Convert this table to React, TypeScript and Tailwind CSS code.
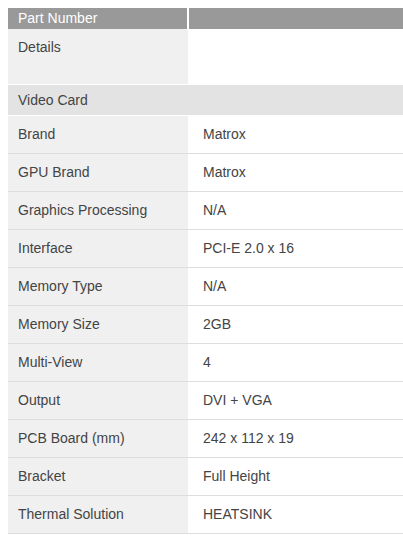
import React from "react";

const rows: [string, string][] = [
  ["Brand", "Matrox"],
  ["GPU Brand", "Matrox"],
  ["Graphics Processing", "N/A"],
  ["Interface", "PCI-E 2.0 x 16"],
  ["Memory Type", "N/A"],
  ["Memory Size", "2GB"],
  ["Multi-View", "4"],
  ["Output", "DVI + VGA"],
  ["PCB Board (mm)", "242 x 112 x 19"],
  ["Bracket", "Full Height"],
  ["Thermal Solution", "HEATSINK"],
];

export default function App() {
  return (
    <div className="bg-white min-h-[545px] pt-2 pl-2 text-[14px] text-[#444444]" style={{ fontFamily: '"Liberation Sans", Arial, sans-serif' }}>
      <div className="w-[395px]">
        <div className="flex h-[21px]">
          <div className="w-[179px] bg-[#999999] text-white pl-[10px] leading-[21px]">Part Number</div>
          <div className="w-[2px]" />
          <div className="flex-1 bg-[#999999]" />
        </div>
        <div className="flex h-[55px]">
          <div className="w-[180px] bg-[#f0f0f0] pl-[10px] pt-[10px] leading-[16px]">Details</div>
          <div className="flex-1 bg-white" />
        </div>
        <div className="h-px" />
        <div className="h-[30px] bg-[#e3e3e3] pl-[10px] leading-[30px]">Video Card</div>
        <div className="h-px" />
        {rows.map(([k, v]) => (
          <div key={k} className="flex h-[38px] border-b border-[#dddddd]">
            <div className="w-[180px] bg-[#f0f0f0] pl-[10px] flex items-center">{k}</div>
            <div className="flex-1 pl-[15px] flex items-center">{v}</div>
          </div>
        ))}
      </div>
    </div>
  );
}
